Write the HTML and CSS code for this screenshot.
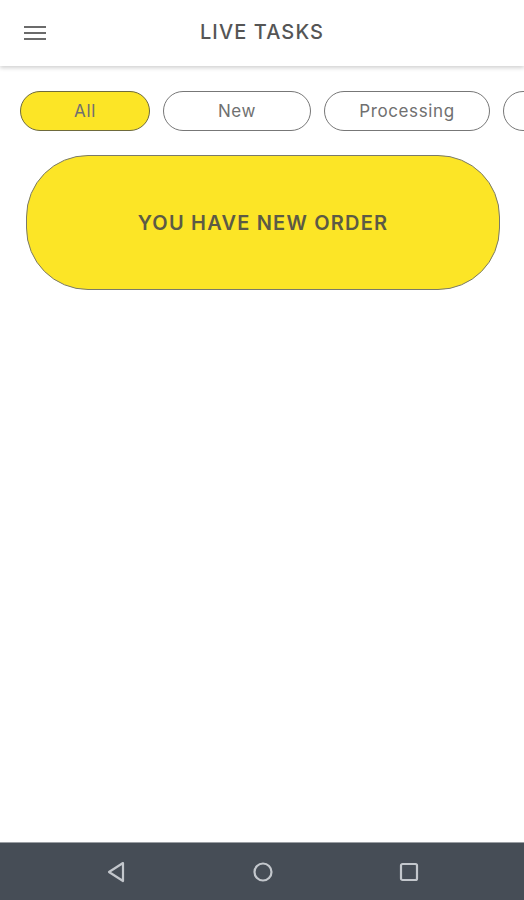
FILE: index.html
```html
<!DOCTYPE html>
<html lang="en">
<head>
    <meta charset="UTF-8">
    <title>Live Tasks</title>
    <link rel="stylesheet" href="styles.css">
</head>
<body>

<div class="screen">
    <header class="topbar">
        <button class="menu-btn" aria-label="Menu">
            <svg width="22" height="16" viewBox="0 0 22 16">
                <rect x="0" y="1" width="22" height="2" fill="#6b6b6b"/>
                <rect x="0" y="7" width="22" height="2" fill="#6b6b6b"/>
                <rect x="0" y="13" width="22" height="2" fill="#6b6b6b"/>
            </svg>
        </button>
        <h1 class="title">LIVE TASKS</h1>
    </header>

    <div class="filters">
        <span class="chip chip-active">All</span>
        <span class="chip chip-new">New</span>
        <span class="chip chip-processing">Processing</span>
        <span class="chip chip-more"></span>
    </div>

    <div class="content">
        <div class="order-card">YOU HAVE NEW ORDER</div>
    </div>

    <nav class="navbar">
        <svg width="20" height="24" viewBox="0 0 20 24">
            <path d="M17 3 L3 12 L17 21 Z" fill="none" stroke="#c3c7cc" stroke-width="2.2" stroke-linejoin="round"/>
        </svg>
        <svg width="22" height="22" viewBox="0 0 22 22">
            <circle cx="11" cy="11" r="8.5" fill="none" stroke="#c3c7cc" stroke-width="2.2"/>
        </svg>
        <svg width="20" height="20" viewBox="0 0 20 20">
            <rect x="2" y="2" width="16" height="16" rx="1.5" fill="none" stroke="#c3c7cc" stroke-width="2.2"/>
        </svg>
    </nav>
</div>

</body>
</html>
```

FILE: styles.css
```css
html, body {
    margin: 0;
    padding: 0;
}
body {
    font-family: Inter, "Open Sans", Arial, sans-serif;
    background-color: #ffffff;
    color: #555555;
}
.screen {
    width: 524px;
    height: 900px;
    display: flex;
    flex-direction: column;
    overflow: hidden;
}
.topbar {
    height: 66px;
    flex-shrink: 0;
    position: relative;
    display: flex;
    align-items: center;
    justify-content: center;
    background-color: #ffffff;
    box-shadow: 0 2px 4px rgba(0,0,0,0.18);
}
.menu-btn {
    position: absolute;
    left: 24px;
    top: 25px;
    padding: 0;
    border: none;
    background: none;
    line-height: 0;
}
.title {
    margin: 0 0 2px 0;
    font-size: 20px;
    font-weight: 500;
    color: #555555;
    letter-spacing: 1.1px;
}
.filters {
    display: flex;
    gap: 13px;
    padding: 25px 0 0 20px;
    white-space: nowrap;
}
.chip {
    flex-shrink: 0;
    box-sizing: border-box;
    height: 40px;
    border: 1px solid #777777;
    border-radius: 20px;
    display: flex;
    align-items: center;
    justify-content: center;
    font-size: 17px;
    color: #707070;
    background-color: #ffffff;
    letter-spacing: 0.6px;
}
.chip-active {
    width: 130px;
    background-color: #fce526;
    border-color: #6e6a3c;
}
.chip-new {
    width: 148px;
}
.chip-processing {
    width: 166px;
}
.chip-more {
    width: 140px;
}
.content {
    flex: 1;
    padding: 24px 24px 0 26px;
}
.order-card {
    box-sizing: border-box;
    height: 135px;
    border: 1px solid #7a7a6a;
    border-radius: 62px;
    background-color: #fce526;
    display: flex;
    align-items: center;
    justify-content: center;
    font-size: 20px;
    font-weight: 600;
    color: #5c5a45;
    letter-spacing: 1.2px;
}
.navbar {
    height: 58px;
    flex-shrink: 0;
    box-sizing: border-box;
    background-color: #464d56;
    border-top: 1px solid #9a9ea3;
    display: flex;
    align-items: center;
    justify-content: space-between;
    padding: 0 105px 0 106px;
}
```
